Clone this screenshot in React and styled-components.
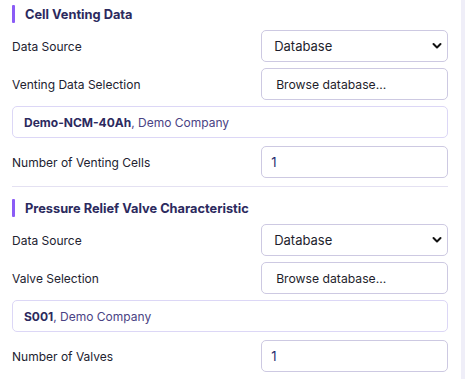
import React from "react";
import styled, { createGlobalStyle } from "styled-components";

const Global = createGlobalStyle`
  html, body { margin: 0; padding: 0; background: #fff; }
  body { font-family: Inter, "Noto Sans", sans-serif; }
  * { box-sizing: border-box; }
`;

const Frame = styled.div`
  display: flex;
  width: 465px;
  height: 379px;
  overflow: hidden;
  background: #fff;
`;

const Panel = styled.div`
  flex: 1;
  padding: 5px 13px 0 12px;
  display: flex;
  flex-direction: column;
`;

const Scrollbar = styled.div`
  width: 4px;
  background: #efeef8;
`;

const Section = styled.section`
  display: flex;
  flex-direction: column;
`;

const Title = styled.h3`
  margin: 0 0 7px 0;
  height: 18px;
  display: flex;
  align-items: center;
  gap: 10px;
  font-size: 12.8px;
  font-weight: 700;
  color: #2c2a5e;
  &::before {
    content: "";
    width: 3px;
    height: 18px;
    border-radius: 1px;
    background: #8b5cf6;
  }
`;

const Rows = styled.div`
  display: flex;
  flex-direction: column;
  gap: 6px;
`;

const Row = styled.div`
  display: grid;
  grid-template-columns: 4fr 3fr;
  align-items: center;
  margin-top: ${(p) => p.$top || 0}px;
`;

const Label = styled.label`
  font-size: 12px;
  color: #222230;
`;

const SelectWrap = styled.div`
  position: relative;
  height: 32px;
`;

const Select = styled.select`
  appearance: none;
  -webkit-appearance: none;
  width: 100%;
  height: 32px;
  border: 1px solid #cdc9e2;
  border-radius: 5px;
  background: #fff;
  padding: 0 24px 0 12px;
  font-family: inherit;
  font-size: 13px;
  color: #1e1e2c;
  outline: none;
`;

const Chevron = styled.svg`
  position: absolute;
  right: 6px;
  top: 12px;
  width: 10px;
  height: 8px;
  pointer-events: none;
`;

const Button = styled.button`
  height: 32px;
  width: 100%;
  border: 1px solid #cdc9e2;
  border-radius: 5px;
  background: #fff;
  font-family: inherit;
  font-size: 12.2px;
  color: #1e1e2c;
  text-align: left;
  padding: 0 0 0 14px;
`;

const Info = styled.div`
  height: 32px;
  border: 1px solid #dcd7f6;
  border-radius: 5px;
  display: flex;
  align-items: center;
  padding: 0 11px;
  font-size: 12px;
  color: #4a4384;
  b { color: #2c2a5e; font-weight: 700; }
`;

const NumberInput = styled.input`
  height: 32px;
  width: 100%;
  border: 1px solid #cdc9e2;
  border-radius: 5px;
  padding: 0 9px;
  font-family: inherit;
  font-size: 13px;
  color: #1f2a6e;
  outline: none;
`;

const Divider = styled.hr`
  border: 0;
  border-top: 1px solid #e4e1f2;
  margin: 8px 0 12px 0;
  width: 100%;
`;

function SelectField({ value }) {
  return (
    <SelectWrap>
      <Select defaultValue={value}>
        <option>Database</option>
        <option>Manual</option>
      </Select>
      <Chevron viewBox="0 0 10 8">
        <path d="M1.5 2 L5 5.5 L8.5 2" fill="none" stroke="#111" strokeWidth="2" strokeLinecap="round" strokeLinejoin="round" />
      </Chevron>
    </SelectWrap>
  );
}

function Block({ title, selLabel, name, countLabel }) {
  return (
    <Section>
      <Title>{title}</Title>
      <Rows>
        <Row>
          <Label>Data Source</Label>
          <SelectField value="Database" />
        </Row>
        <Row>
          <Label>{selLabel}</Label>
          <Button>Browse database...</Button>
        </Row>
        <Info>
          <b>{name}</b>, Demo Company
        </Info>
      </Rows>
      <Row $top={8}>
        <Label>{countLabel}</Label>
        <NumberInput type="text" defaultValue="1" />
      </Row>
    </Section>
  );
}

export default function App() {
  return (
    <>
      <Global />
      <Frame>
        <Panel>
          <Block
            title="Cell Venting Data"
            selLabel="Venting Data Selection"
            name="Demo-NCM-40Ah"
            countLabel="Number of Venting Cells"
          />
          <Divider />
          <Block
            title="Pressure Relief Valve Characteristic"
            selLabel="Valve Selection"
            name="S001"
            countLabel="Number of Valves"
          />
        </Panel>
        <Scrollbar />
      </Frame>
    </>
  );
}
